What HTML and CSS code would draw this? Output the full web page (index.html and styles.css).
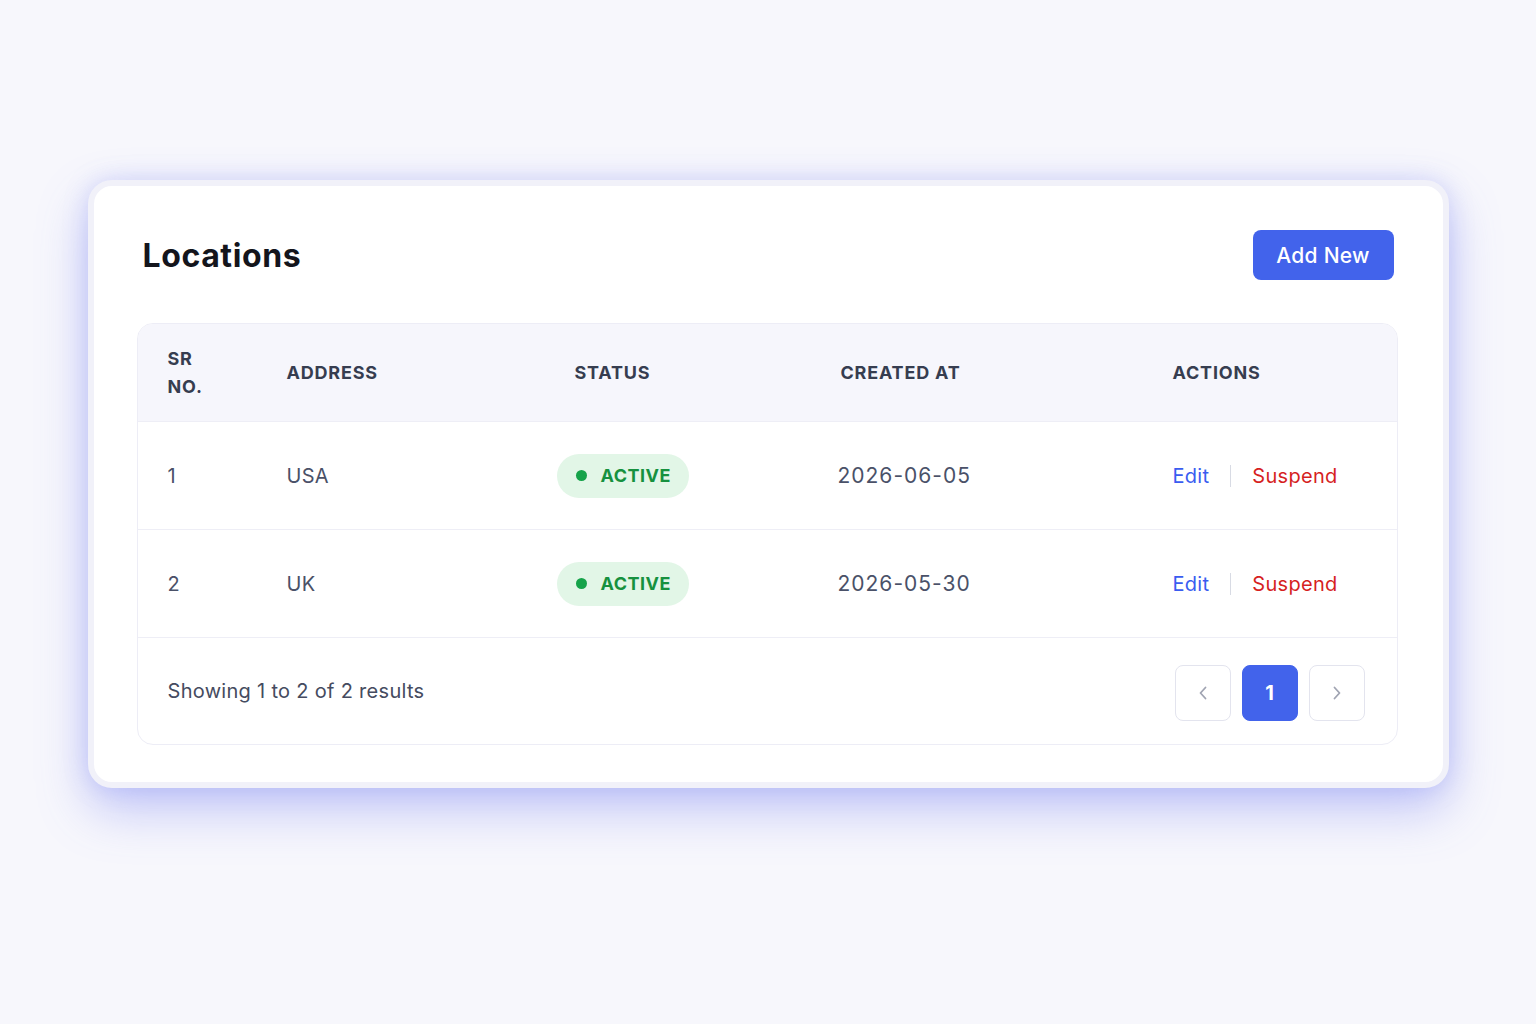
FILE: index.html
```html
<!DOCTYPE html>
<html lang="en">
<head>
    <meta charset="UTF-8">
    <meta name="viewport" content="width=device-width, initial-scale=1.0">
    <title>Locations</title>
    <link rel="stylesheet" href="styles.css">
</head>
<body>
    <div class="page">
        <div class="card">
            <div class="card-head">
                <h1>Locations</h1>
                <button class="btn-add">Add New</button>
            </div>
            <div class="table-wrap">
                <table class="list">
                    <colgroup>
                        <col class="c-no">
                        <col class="c-address">
                        <col class="c-status">
                        <col class="c-created">
                        <col>
                    </colgroup>
                    <thead>
                        <tr>
                            <th>SR<br>NO.</th>
                            <th>Address</th>
                            <th>Status</th>
                            <th>Created At</th>
                            <th>Actions</th>
                        </tr>
                    </thead>
                    <tbody>
                        <tr>
                            <td>1</td>
                            <td>USA</td>
                            <td class="status"><span class="badge"><i></i>ACTIVE</span></td>
                            <td class="date">2026-06-05</td>
                            <td>
                                <div class="actions">
                                    <a class="edit" href="#">Edit</a>
                                    <span class="sep"></span>
                                    <a class="suspend" href="#">Suspend</a>
                                </div>
                            </td>
                        </tr>
                        <tr>
                            <td>2</td>
                            <td>UK</td>
                            <td class="status"><span class="badge"><i></i>ACTIVE</span></td>
                            <td class="date">2026-05-30</td>
                            <td>
                                <div class="actions">
                                    <a class="edit" href="#">Edit</a>
                                    <span class="sep"></span>
                                    <a class="suspend" href="#">Suspend</a>
                                </div>
                            </td>
                        </tr>
                    </tbody>
                </table>
                <div class="table-foot">
                    <span class="count">Showing 1 to 2 of 2 results</span>
                    <div class="pager">
                        <button class="pg">
                            <svg width="18" height="18" viewBox="0 0 18 18"><path d="M11.5 3.5 L6.5 9 L11.5 14.5" fill="none" stroke="currentColor" stroke-width="1.8" stroke-linecap="round" stroke-linejoin="round"/></svg>
                        </button>
                        <button class="pg current">1</button>
                        <button class="pg">
                            <svg width="18" height="18" viewBox="0 0 18 18"><path d="M6.5 3.5 L11.5 9 L6.5 14.5" fill="none" stroke="currentColor" stroke-width="1.8" stroke-linecap="round" stroke-linejoin="round"/></svg>
                        </button>
                    </div>
                </div>
            </div>
        </div>
    </div>
</body>
</html>
```
FILE: styles.css
```css
html, body{
    margin: 0;
    background: #f7f7fc;
}
body{
    font-family: Inter, "Noto Sans", sans-serif;
    color: #4a5168;
}
.page{
    min-height: 100vh;
    box-sizing: border-box;
    padding: 180px 0 60px;
}
.card{
    width: 1361px;
    box-sizing: border-box;
    margin: 0 auto;
    background: #fff;
    border: 6px solid #f1f1f9;
    border-radius: 24px;
    padding: 44px 45px 37px 43px;
    box-shadow: 0 22px 50px rgba(99, 110, 241, 0.36), 0 0 24px rgba(130, 140, 245, 0.25);
}
.card-head{
    display: flex;
    justify-content: space-between;
    align-items: center;
    margin-bottom: 43px;
}
.card-head h1{
    margin: 0 0 0 6px;
    font-size: 32px;
    font-weight: 700;
    color: #14151c;
    letter-spacing: 0.6px;
}
.btn-add{
    height: 50px;
    width: 141px;
    margin-right: 4px;
    border: none;
    border-radius: 8px;
    background: #4263eb;
    color: #fff;
    font-family: inherit;
    font-size: 21px;
    font-weight: 500;
    letter-spacing: 0.3px;
    cursor: pointer;
}
.table-wrap{
    border: 1px solid #ededf6;
    border-radius: 16px;
    overflow: hidden;
}
.list{
    width: 100%;
    border-collapse: collapse;
    table-layout: fixed;
}
.c-no{ width: 119px; }
.c-address{ width: 288px; }
.c-status{ width: 266px; }
.c-created{ width: 332px; }
.list th{
    background: #f6f6fc;
    height: 97px;
    padding: 0 0 0 30px;
    text-align: left;
    font-size: 18px;
    font-weight: 700;
    line-height: 28px;
    text-transform: uppercase;
    color: #363d50;
    letter-spacing: 0.8px;
}
.list td{
    height: 107px;
    padding: 0 0 0 30px;
    border-top: 1px solid #eeeef6;
    font-size: 20px;
    color: #4a5168;
    letter-spacing: 0.3px;
}
.list td.status{
    padding-left: 12px;
}
.list td.date{
    padding-left: 27px;
    font-size: 21px;
    letter-spacing: 1px;
}
.badge{
    display: inline-flex;
    align-items: center;
    gap: 14px;
    height: 44px;
    padding: 0 18px 0 19px;
    border-radius: 22px;
    background: #e2f6e7;
    color: #16913f;
    font-size: 18px;
    font-weight: 700;
    letter-spacing: 0.5px;
}
.badge i{
    width: 11px;
    height: 11px;
    border-radius: 50%;
    background: #16a34a;
}
.actions{
    display: flex;
    align-items: center;
    gap: 21px;
}
.actions a{
    text-decoration: none;
    font-size: 20px;
}
.edit{
    color: #3a5cf0;
}
.suspend{
    color: #d61f1f;
}
.sep{
    width: 1px;
    height: 22px;
    background: #d8dbe4;
}
.table-foot{
    display: flex;
    justify-content: space-between;
    align-items: center;
    height: 106px;
    padding: 0 32px 0 30px;
    border-top: 1px solid #eeeef6;
}
.count{
    font-size: 20px;
    color: #454b60;
    letter-spacing: 0.3px;
}
.pager{
    display: flex;
    gap: 11px;
    margin-top: 3px;
}
.pg{
    width: 56px;
    height: 56px;
    display: flex;
    align-items: center;
    justify-content: center;
    border: 1px solid #e3e4ee;
    border-radius: 8px;
    background: #fff;
    color: #a0a4b2;
    font-family: inherit;
    font-size: 20px;
    font-weight: 700;
    cursor: pointer;
}
.pg.current{
    background: #4263eb;
    border-color: #4263eb;
    color: #fff;
}
```
